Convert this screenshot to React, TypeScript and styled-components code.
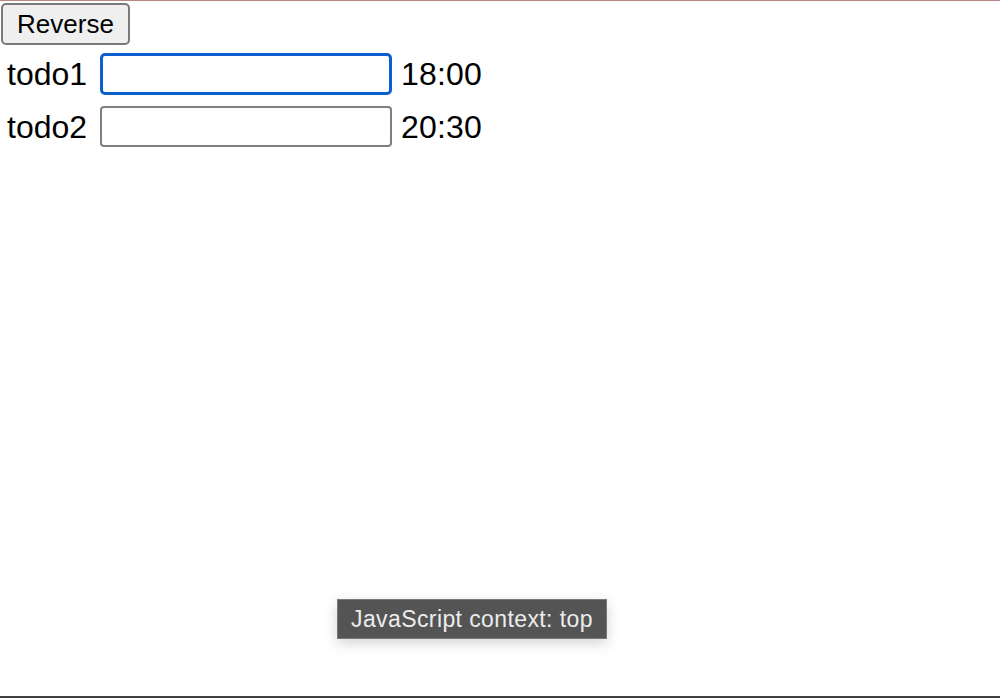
import styled, { createGlobalStyle } from "styled-components";

const todos = [
  { id: 1, name: "todo1", time: "18:00", focused: true },
  { id: 2, name: "todo2", time: "20:30", focused: false },
];

export default function App() {
  return (
    <Page>
      <GlobalStyle />
      <ReverseButton>Reverse</ReverseButton>
      <TodoList>
        {todos.map((todo) => (
          <TodoRow key={todo.id}>
            <TodoName>{todo.name}</TodoName>
            <TodoInput $focused={todo.focused} />
            <TodoTime>{todo.time}</TodoTime>
          </TodoRow>
        ))}
      </TodoList>
      <ContextTooltip>JavaScript context: top</ContextTooltip>
    </Page>
  );
}

const GlobalStyle = createGlobalStyle`
  body {
    margin: 0;
    background: #fff;
    font-family: "Liberation Sans", Arial, sans-serif;
  }
`;

const Page = styled.div`
  position: relative;
  box-sizing: border-box;
  height: 698px;
  border-top: 1px solid #b98585;
  border-bottom: 2px solid #3f3f3f;
  display: flex;
  flex-direction: column;
  align-items: flex-start;
`;

const ReverseButton = styled.button`
  margin: 2px 0 0 1px;
  width: 129px;
  height: 42px;
  padding: 0;
  font-family: "Liberation Sans", Arial, sans-serif;
  font-size: 26px;
  color: #000;
  background: #efefef;
  border: 2px solid #7a7a7a;
  border-radius: 5px;
`;

const TodoList = styled.div`
  display: flex;
  flex-direction: column;
  gap: 11px;
  margin-top: 8px;
`;

const TodoRow = styled.div`
  display: flex;
  align-items: flex-start;
  height: 42px;
  font-size: 32px;
  line-height: 42px;
  color: #000;
`;

const TodoName = styled.span`
  width: 100px;
  padding-left: 7px;
  box-sizing: border-box;
`;

const TodoInput = styled.input<{ $focused: boolean }>`
  box-sizing: border-box;
  width: 292px;
  height: ${(p) => (p.$focused ? "42px" : "41px")};
  margin-right: 9px;
  border: ${(p) => (p.$focused ? "3px solid #0b5fce" : "2px solid #7f7f7f")};
  border-radius: ${(p) => (p.$focused ? "5px" : "4px")};
  outline: none;
  background: #fff;
`;

const TodoTime = styled.span`
  letter-spacing: 0.2px;
`;

const ContextTooltip = styled.div`
  position: absolute;
  left: 337px;
  top: 598px;
  box-sizing: border-box;
  width: 270px;
  height: 40px;
  display: flex;
  align-items: center;
  padding-left: 13px;
  background: #545454;
  border: 1px solid #7a7a7a;
  color: #ececec;
  font-size: 23px;
  letter-spacing: 0.4px;
  box-shadow: 0 4px 14px rgba(0, 0, 0, 0.18);
`;
